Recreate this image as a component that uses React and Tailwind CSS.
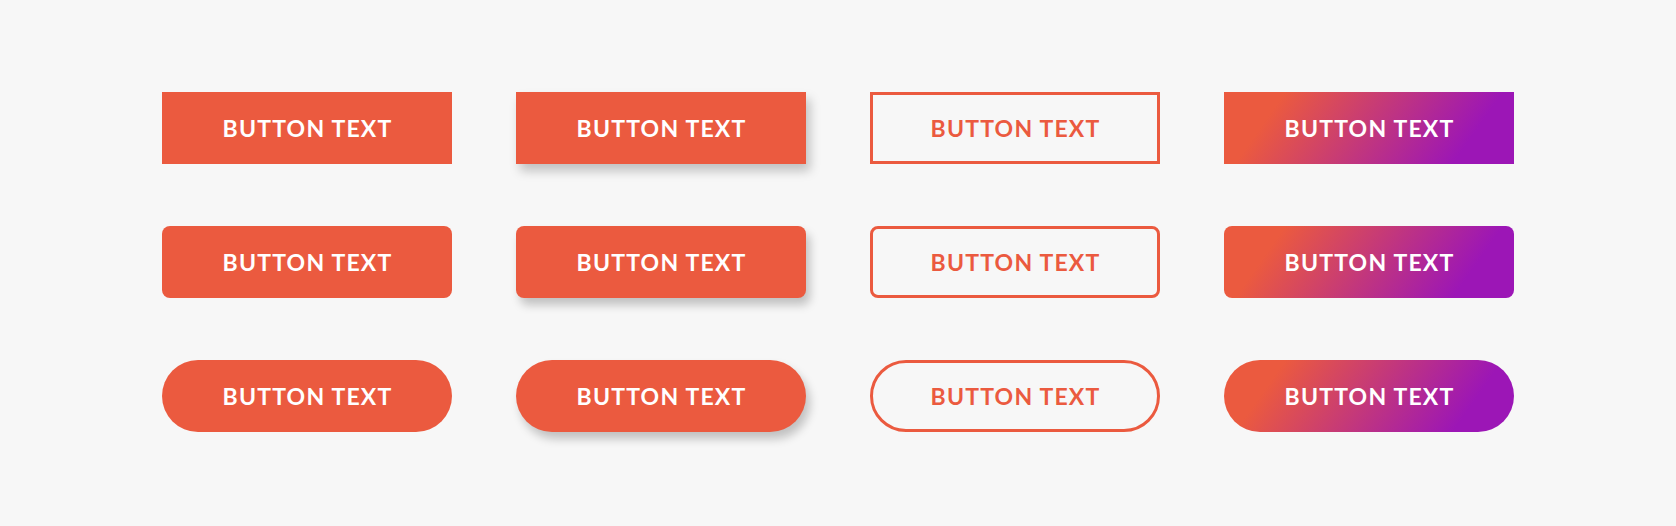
import React from 'react'

const variants = ['solid', 'shadow', 'outline', 'gradient']
const shapes = ['rounded-none', 'rounded-[8px]', 'rounded-full']

function Btn({ variant, shape }) {
  let cls = 'h-[72px] w-[290px] flex items-center justify-center text-[23px] font-bold tracking-[1.2px] '
  if (variant === 'solid') cls += 'bg-[#eb5a3f] text-white'
  if (variant === 'shadow') cls += 'bg-[#eb5a3f] text-white shadow-[4px_7px_10px_rgba(0,0,0,0.22)]'
  if (variant === 'outline') cls += 'border-[3px] border-[#eb5a3f] text-[#eb5a3f]'
  if (variant === 'gradient') cls += 'bg-[linear-gradient(125deg,#eb5a3f_18%,#9c16b6_82%)] text-white'

  return (
    <div className={`${cls} ${shape}`}>
      <span className="leading-none pl-[1px]">BUTTON TEXT</span>
    </div>
  )
}

export default function App() {
  return (
    <div
      className="w-[1676px] h-[526px] bg-[#f7f7f7] pl-[162px] pt-[92px]"
      style={{ fontFamily: 'Lato, "Open Sans", sans-serif' }}
    >
      <div className="grid grid-cols-[repeat(4,290px)] gap-x-[64px] gap-y-[62px]">
        {shapes.map((shape) =>
          variants.map((v) => <Btn key={shape + v} variant={v} shape={shape} />)
        )}
      </div>
    </div>
  )
}
